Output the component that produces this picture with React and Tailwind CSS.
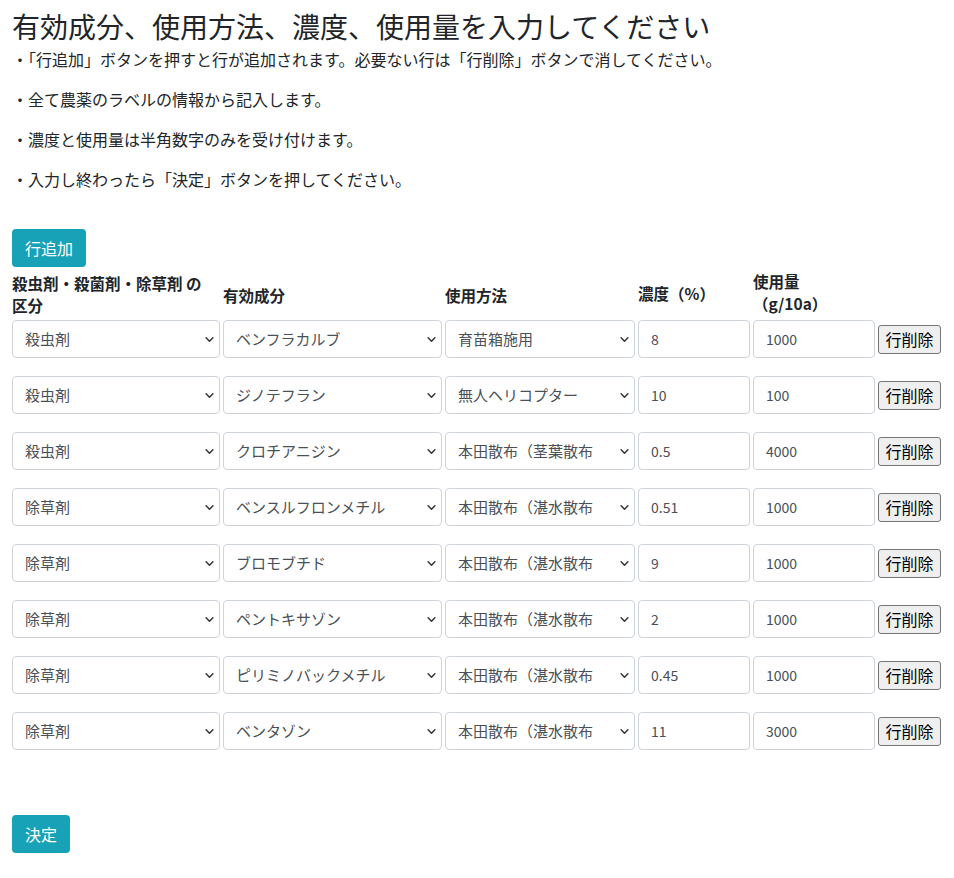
import React from "react";

const rows = [
  ["殺虫剤", "ベンフラカルブ", "育苗箱施用", "8", "1000"],
  ["殺虫剤", "ジノテフラン", "無人ヘリコプター", "10", "100"],
  ["殺虫剤", "クロチアニジン", "本田散布（茎葉散布", "0.5", "4000"],
  ["除草剤", "ベンスルフロンメチル", "本田散布（湛水散布", "0.51", "1000"],
  ["除草剤", "ブロモブチド", "本田散布（湛水散布", "9", "1000"],
  ["除草剤", "ペントキサゾン", "本田散布（湛水散布", "2", "1000"],
  ["除草剤", "ピリミノバックメチル", "本田散布（湛水散布", "0.45", "1000"],
  ["除草剤", "ベンタゾン", "本田散布（湛水散布", "11", "3000"],
];

const Chevron = () => (
  <svg width="9" height="9" viewBox="0 0 16 16" className="shrink-0 ml-1">
    <path d="M2 5l6 6 6-6" fill="none" stroke="#343a40" strokeWidth="2.8" strokeLinecap="round" strokeLinejoin="round" />
  </svg>
);

const Select = ({ value, w }) => (
  <div className={`${w} h-[38px] border border-[#ced4da] rounded flex items-center pl-3 pr-[5px] text-[#495057] text-[15px] bg-white overflow-hidden`}>
    <span className="flex-1 whitespace-nowrap overflow-hidden">{value}</span>
    <Chevron />
  </div>
);

const Input = ({ value, w }) => (
  <div className={`${w} h-[38px] border border-[#ced4da] rounded flex items-center px-3 text-[#495057] text-[14px]`}>
    {value}
  </div>
);

export default function App() {
  return (
    <div className="px-3 pt-[6px] text-[#212529] text-[15px]" style={{ fontFamily: '"Noto Sans CJK JP", "Noto Sans", sans-serif' }}>
      <h1 className="text-[28px] leading-[40px]">有効成分、使用方法、濃度、使用量を入力してください</h1>
      <div className="flex flex-col gap-[16px] text-[16px] leading-[24px] mt-[1px]">
        <p>・「行追加」ボタンを押すと行が追加されます。必要ない行は「行削除」ボタンで消してください。</p>
        <p>・全て農薬のラベルの情報から記入します。</p>
        <p>・濃度と使用量は半角数字のみを受け付けます。</p>
        <p>・入力し終わったら「決定」ボタンを押してください。</p>
      </div>
      <button className="mt-[38px] bg-[#17a2b8] text-white rounded h-[38px] w-[74px] text-[16px]">行追加</button>
      <div className="flex gap-[3px] font-bold text-[15.5px] leading-[22px] mt-[3px] items-end">
        <div className="w-[208px] whitespace-nowrap">殺虫剤・殺菌剤・除草剤 の<br />区分</div>
        <div className="w-[219px] mb-[10px]">有効成分</div>
        <div className="w-[190px] mb-[10px]">使用方法</div>
        <div className="w-[112px] mb-[12px]">濃度（%）</div>
        <div className="w-[122px] mb-[2px]">使用量<br />（g/10a）</div>
      </div>
      <div className="flex flex-col gap-[18px] mt-[4px]">
        {rows.map((r, i) => (
          <div key={i} className="flex gap-[3px] items-center">
            <Select value={r[0]} w="w-[208px]" />
            <Select value={r[1]} w="w-[219px]" />
            <Select value={r[2]} w="w-[190px]" />
            <Input value={r[3]} w="w-[112px]" />
            <Input value={r[4]} w="w-[122px]" />
            <button className="h-[29px] w-[63px] bg-[#efefef] border border-[#767676] rounded-[3px] text-[16px] text-black">行削除</button>
          </div>
        ))}
      </div>
      <button className="mt-[65px] bg-[#17a2b8] text-white rounded h-[38px] w-[58px] text-[16px]">決定</button>
    </div>
  );
}
